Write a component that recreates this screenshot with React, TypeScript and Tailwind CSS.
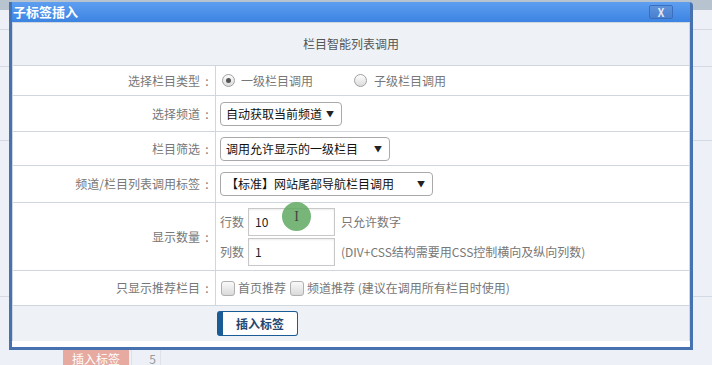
import { Fragment } from "react";

const font = { fontFamily: '"Noto Sans CJK SC", "Liberation Sans", sans-serif' };

function Label({ text }: { text: string }) {
  return (
    <div className="flex w-[203px] shrink-0 items-center justify-end border-r border-[#cfd6dd] pr-[1px] text-[12px] text-[#777]">
      {text}
      <span className="w-[14px] text-center">:</span>
    </div>
  );
}

function Select({ value, width }: { value: string; width: string }) {
  return (
    <div
      className={`flex h-[24px] ${width} items-center justify-between whitespace-nowrap rounded-[4px] border border-[#a9a9a9] bg-white pl-[5px] pr-[7px] text-[12px] text-[#111]`}
    >
      <span>{value}</span>
      <span className="text-[8px] text-[#222]">▼</span>
    </div>
  );
}

function Radio({ checked }: { checked?: boolean }) {
  return (
    <span className="flex h-[13px] w-[13px] items-center justify-center rounded-full border border-[#a0a0a0] bg-gradient-to-b from-[#fdfdfd] to-[#dcdcdc]">
      {checked && <span className="h-[5px] w-[5px] rounded-full bg-[#555]" />}
    </span>
  );
}

function Checkbox() {
  return <span className="h-[15px] w-[14px] rounded-[3px] border border-[#b0b0b0] bg-gradient-to-b from-[#fafafa] to-[#dadada]" />;
}

export default function App() {
  return (
    <div className="relative h-[365px] w-[712px] overflow-hidden bg-[#edf0f6]" style={font}>
      {/* page behind the dialog */}
      <div className="absolute left-0 top-0 h-[10px] w-full bg-[#b7c3cf]" />
      <div className="absolute left-0 top-[29px] h-px w-full bg-[#d3d9e2]" />
      <div className="absolute left-0 top-[66px] h-px w-full bg-[#d3d9e2]" />
      <div className="absolute left-0 top-[140px] h-px w-full bg-[#d3d9e2]" />
      <div className="absolute left-0 top-[296px] h-px w-full bg-[#d3d9e2]" />
      <div className="absolute left-[63px] top-[350px] flex h-[17px] w-[66px] items-center justify-center bg-[#e6aaa0] text-[12px] text-white">
        插入标签
      </div>
      <div className="absolute left-[131px] top-[350px] flex h-[17px] w-[30px] items-center justify-end border-x border-[#dde2ea] pr-[4px] text-[12px] text-[#999]">
        5
      </div>

      {/* dialog */}
      <div className="absolute left-[9px] top-[2px] flex w-[684px] flex-col rounded-tr-[4px] border-x-[3px] border-b-[3px] border-[#4673b0] bg-white">
        <div className="flex h-[20px] items-center justify-between bg-gradient-to-b from-[#5d9ef0] to-[#3c84e2] pl-[1px] pr-[17px]">
          <span className="text-[13px] font-bold text-white">子标签插入</span>
          <span className="flex h-[14px] w-[24px] items-center justify-center rounded-[2px] border border-[#3a6fc0] bg-gradient-to-b from-[#5e93dc] to-[#4a7fcf] text-[11px] font-bold text-[#dfe6f0]">
            X
          </span>
        </div>

        <div className="flex flex-col border-x border-t border-[#cfd6dd] bg-white">
          <div className="flex h-[43px] items-center justify-center border-b border-[#cfd6dd] bg-[#eef2f7] text-[12px] text-[#555]">
            栏目智能列表调用
          </div>

          <div className="flex h-[30px] border-b border-[#cfd6dd]">
            <Label text="选择栏目类型" />
            <div className="flex items-center pl-[6px] text-[12px] text-[#777]">
              <Radio checked />
              <span className="ml-[6px]">一级栏目调用</span>
              <span className="ml-[41px]">
                <Radio />
              </span>
              <span className="ml-[7px]">子级栏目调用</span>
            </div>
          </div>

          <div className="flex h-[36px] border-b border-[#cfd6dd]">
            <Label text="选择频道" />
            <div className="flex items-center pl-[4px]">
              <Select value="自动获取当前频道" width="w-[122px]" />
            </div>
          </div>

          <div className="flex h-[34px] border-b border-[#cfd6dd]">
            <Label text="栏目筛选" />
            <div className="flex items-center pl-[4px]">
              <Select value="调用允许显示的一级栏目" width="w-[170px]" />
            </div>
          </div>

          <div className="flex h-[37px] border-b border-[#cfd6dd]">
            <Label text="频道/栏目列表调用标签" />
            <div className="flex items-center pl-[4px]">
              <Select value="【标准】网站尾部导航栏目调用" width="w-[213px]" />
            </div>
          </div>

          <div className="flex h-[68px] border-b border-[#cfd6dd]">
            <Label text="显示数量" />
            <div className="flex flex-col justify-center gap-[2px] pl-[4px] text-[12px] text-[#777]">
              {[
                ["行数", "10", "只允许数字"],
                ["列数", "1", "(DIV+CSS结构需要用CSS控制横向及纵向列数)"],
              ].map(([a, b, c]) => (
                <Fragment key={a}>
                  <div className="flex items-center">
                    <span className="w-[28px]">{a}</span>
                    <span className="flex h-[28px] w-[87px] items-center border border-[#c8c8c8] bg-white pl-[6px] text-[#222] shadow-[inset_0_1px_2px_rgba(0,0,0,0.08)]">
                      {b}
                    </span>
                    <span className="ml-[6px]">{c}</span>
                  </div>
                </Fragment>
              ))}
            </div>
          </div>

          <div className="flex h-[35px] border-b border-[#cfd6dd]">
            <Label text="只显示推荐栏目" />
            <div className="flex items-center pl-[5px] text-[12px] text-[#777]">
              <Checkbox />
              <span className="ml-[3px]">首页推荐</span>
              <span className="ml-[4px] flex">
                <Checkbox />
              </span>
              <span className="ml-[3px]">频道推荐 (建议在调用所有栏目时使用)</span>
            </div>
          </div>

          <div className="flex h-[35px] items-center bg-[#eef2f7] pl-[204px]">
            <span className="flex h-[25px] w-[81px] items-center justify-center rounded-[3px] border border-l-[6px] border-[#1b5b96] bg-white text-[12px] font-bold text-[#24466e]">
              插入标签
            </span>
          </div>
        </div>
        <div className="h-[6px] bg-white" />
      </div>

      {/* pointer highlight */}
      <div
        className="absolute left-[282px] top-[202px] flex h-[29px] w-[29px] items-center justify-center rounded-full bg-[#5fa862]/85 text-[14px] text-[#444]"
        style={{ fontFamily: '"Liberation Serif", serif' }}
      >
        I
      </div>
    </div>
  );
}
